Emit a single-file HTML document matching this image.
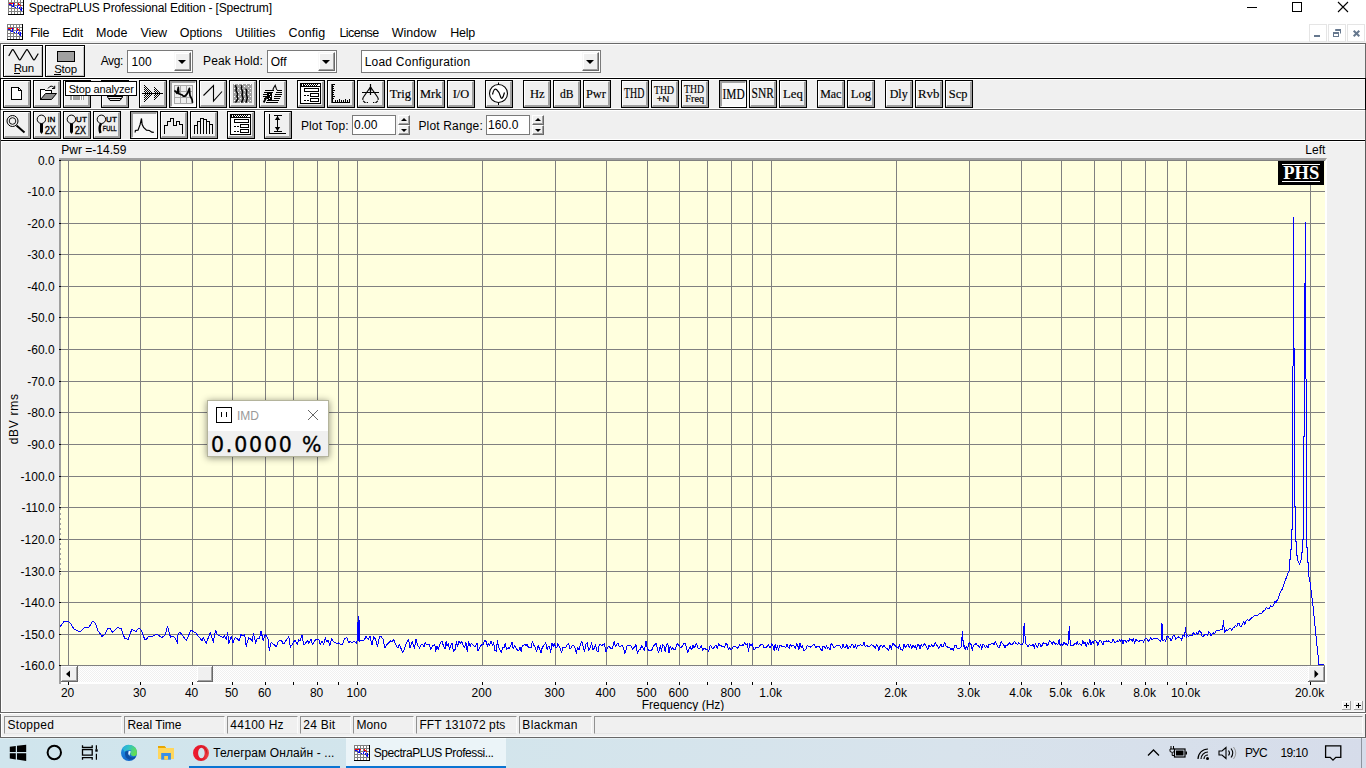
<!DOCTYPE html>
<html><head><meta charset="utf-8"><title>SpectraPLUS Professional Edition - [Spectrum]</title>
<style>
html,body{margin:0;padding:0;width:1366px;height:768px;overflow:hidden;background:#f0f0f0;}
body{position:relative;font-family:"Liberation Sans",sans-serif;font-size:12px;color:#000;}
.a{position:absolute;white-space:nowrap;}
.t{position:absolute;white-space:pre;line-height:normal;}
.btn{position:absolute;width:28px;height:28px;box-sizing:border-box;background:#f0f0f0;border:1px solid #000;}
.btn:before{content:"";position:absolute;left:0;top:0;right:0;bottom:0;border-top:1px solid #fff;border-left:1px solid #fff;border-right:2px solid #a0a0a0;border-bottom:2px solid #a0a0a0;}
.btn.dn{background:#f8f8f8;}
.btn.dn:before{border-top:2px solid #a0a0a0;border-left:2px solid #a0a0a0;border-right:1px solid #fff;border-bottom:1px solid #fff;}
.btn svg{position:absolute;left:0;top:0;}
.big{position:absolute;width:40px;height:32px;box-sizing:border-box;background:#f0f0f0;border:1px solid #000;box-shadow:inset 1px 1px 0 #fff, inset -1px -1px 0 #c4c4c4;}
.combo{position:absolute;box-sizing:border-box;background:#fff;border:1px solid #7a7a7a;}
.dd{position:absolute;top:1px;right:1px;bottom:1px;width:17px;box-sizing:border-box;background:#f0f0f0;border:1px solid #f8f8f8;border-right-color:#696969;border-bottom-color:#696969;box-shadow:inset -1px -1px 0 #a0a0a0, inset 1px 1px 0 #fff;}
.dd:after{content:"";position:absolute;left:3px;top:7px;border-left:4px solid transparent;border-right:4px solid transparent;border-top:4px solid #000;}
.spn{position:absolute;width:12px;height:10px;box-sizing:border-box;background:#f0f0f0;border:1px solid #fff;border-right-color:#696969;border-bottom-color:#696969;box-shadow:inset -1px -1px 0 #a0a0a0;}
.sunk{position:absolute;box-sizing:border-box;border:1px solid #919191;border-right-color:#fbfbfb;border-bottom-color:#e6e6e6;height:18px;top:716px;}
</style></head><body>

<div class="a" style="left:0;top:0;width:1366px;height:41px;background:#fff"></div>
<svg class="a" style="left:8px;top:-1px" width="16" height="16" viewBox="0 0 16 16" shape-rendering="crispEdges">
<rect x="0" y="0" width="16" height="16" fill="#fff"/>
<path d="M0.5 0V16M3.5 0V16M6.5 0V16M9.5 0V16M12.5 0V16M0 0.5H16M0 3.5H16M0 6.5H16M0 9.5H16M0 12.5H16" stroke="#808080" stroke-width="1" fill="none"/>
<path d="M15.5 0V16M0 15.5H16" stroke="#000" stroke-width="1" fill="none"/>
<path d="M1 4h1v1h-1zM2 4h1v1h-1zM3 4h1v1h-1zM4 4h1v1h-1zM6 4h1v1h-1zM10 4h1v1h-1zM10 5h1v1h-1zM11 5h1v1h-1zM12 6h1v1h-1z" fill="#f00"/><path d="M1 5h1v1h-1zM2 5h1v1h-1zM3 6h1v1h-1zM4 7h1v1h-1zM5 4h1v1h-1zM5 5h1v1h-1zM5 6h1v1h-1zM5 7h1v1h-1zM7 8h1v1h-1zM9 8h1v1h-1zM9 7h1v1h-1zM10 6h1v1h-1zM11 8h1v1h-1zM11 9h1v1h-1zM12 10h1v1h-1zM13 8h1v1h-1zM13 9h1v1h-1zM13 10h1v1h-1zM13 11h1v1h-1z" fill="#00f"/>
</svg>
<div class="t" style="left:28.86px;top:1px;font-size:12px;letter-spacing:-0.173px;">SpectraPLUS Professional Edition - [Spectrum]</div>
<svg class="a" style="left:1236px;top:0" width="130" height="22" viewBox="0 0 130 22" shape-rendering="crispEdges">
<rect x="11" y="7" width="10" height="1" fill="#000"/>
<rect x="56.5" y="2.5" width="9" height="9" fill="none" stroke="#000" stroke-width="1"/>
<path d="M102 2L112 12M112 2L102 12" stroke="#000" stroke-width="1.1" fill="none" shape-rendering="auto"/>
</svg>
<svg class="a" style="left:7px;top:24px" width="16" height="16" viewBox="0 0 16 16" shape-rendering="crispEdges">
<rect x="0" y="0" width="16" height="16" fill="#fff"/>
<path d="M0.5 0V16M3.5 0V16M6.5 0V16M9.5 0V16M12.5 0V16M0 0.5H16M0 3.5H16M0 6.5H16M0 9.5H16M0 12.5H16" stroke="#808080" stroke-width="1" fill="none"/>
<path d="M15.5 0V16M0 15.5H16" stroke="#000" stroke-width="1" fill="none"/>
<path d="M1 4h1v1h-1zM2 4h1v1h-1zM3 4h1v1h-1zM4 4h1v1h-1zM6 4h1v1h-1zM10 4h1v1h-1zM10 5h1v1h-1zM11 5h1v1h-1zM12 6h1v1h-1z" fill="#f00"/><path d="M1 5h1v1h-1zM2 5h1v1h-1zM3 6h1v1h-1zM4 7h1v1h-1zM5 4h1v1h-1zM5 5h1v1h-1zM5 6h1v1h-1zM5 7h1v1h-1zM7 8h1v1h-1zM9 8h1v1h-1zM9 7h1v1h-1zM10 6h1v1h-1zM11 8h1v1h-1zM11 9h1v1h-1zM12 10h1v1h-1zM13 8h1v1h-1zM13 9h1v1h-1zM13 10h1v1h-1zM13 11h1v1h-1z" fill="#00f"/>
</svg>
<div class="t" style="left:30.24px;top:26px;font-size:12.5px;letter-spacing:-0.308px;">File</div>
<div class="t" style="left:62.24px;top:26px;font-size:12.5px;letter-spacing:-0.205px;">Edit</div>
<div class="t" style="left:96.02px;top:26px;font-size:12.5px;letter-spacing:0.036px;">Mode</div>
<div class="t" style="left:140.54px;top:26px;font-size:12.5px;letter-spacing:-0.137px;">View</div>
<div class="t" style="left:179.84px;top:26px;font-size:12.5px;letter-spacing:-0.124px;">Options</div>
<div class="t" style="left:235.34px;top:26px;font-size:12.5px;letter-spacing:-0.008px;">Utilities</div>
<div class="t" style="left:288.59px;top:26px;font-size:12.5px;letter-spacing:0.097px;">Config</div>
<div class="t" style="left:339.44px;top:26px;font-size:12.5px;letter-spacing:-0.553px;">License</div>
<div class="t" style="left:391.72px;top:26px;font-size:12.5px;letter-spacing:0.026px;">Window</div>
<div class="t" style="left:450.24px;top:26px;font-size:12.5px;letter-spacing:-0.248px;">Help</div>
<div class="a" style="left:1309px;top:24px;width:18px;height:18px;box-sizing:border-box;border:1px solid #e5e5e5;background:#fff"></div>
<div class="a" style="left:1328px;top:24px;width:18px;height:18px;box-sizing:border-box;border:1px solid #e5e5e5;background:#fff"></div>
<div class="a" style="left:1347px;top:24px;width:18px;height:18px;box-sizing:border-box;border:1px solid #e5e5e5;background:#fff"></div>
<svg class="a" style="left:1309px;top:24px" width="57" height="18" viewBox="0 0 57 18">
<rect x="5" y="11" width="6" height="2" fill="#66788e"/>
<path d="M26.200 5H32V9.600H31V7H26.200Z" fill="#66788e"/><path fill-rule="evenodd" d="M24 8H30V13H24ZM25 10V12H29V10Z" fill="#66788e"/>
<path d="M44.700 6.700L50.300 12.300M50.300 6.700L44.700 12.300" stroke="#66788e" stroke-width="2" fill="none"/>
</svg>
<div class="a" style="left:0;top:43px;width:1366px;height:1px;background:#696969"></div>
<div class="a" style="left:1px;top:44px;width:1365px;height:1px;background:#fff"></div>
<div class="a" style="left:0;top:78px;width:1366px;height:1px;background:#000"></div>
<div class="a" style="left:0;top:109px;width:1366px;height:1px;background:#696969"></div>
<div class="a" style="left:0;top:140px;width:1366px;height:1px;background:#000"></div>
<div class="a" style="left:1px;top:141px;width:1364px;height:1px;background:#fff"></div>
<div class="a" style="left:1px;top:77px;width:1364px;height:1px;background:#fff"></div>
<div class="a" style="left:1px;top:79px;width:1364px;height:1px;background:#fff"></div>
<div class="a" style="left:1px;top:108px;width:1364px;height:1px;background:#fff"></div>
<div class="a" style="left:1px;top:139px;width:1364px;height:1px;background:#fff"></div>
<div class="a" style="left:1px;top:45px;width:2px;height:33px;background:#fff"></div>
<div class="a" style="left:1px;top:79px;width:2px;height:30px;background:#fff"></div>
<div class="a" style="left:1px;top:110px;width:2px;height:30px;background:#fff"></div>
<div class="a" style="left:0;top:44px;width:1px;height:34px;background:#696969"></div><div class="a" style="left:1px;top:45px;width:1px;height:33px;background:#fff"></div>
<div class="a" style="left:0;top:78px;width:1px;height:32px;background:#000"></div>
<div class="a" style="left:1365px;top:78px;width:1px;height:32px;background:#000"></div><div class="a" style="left:1365px;top:44px;width:1px;height:34px;background:#696969"></div>
<div class="a" style="left:0;top:110px;width:1px;height:628px;background:#5a5a5a"></div>
<div class="a" style="left:1px;top:142px;width:1px;height:595px;background:#fff"></div>
<div class="a" style="left:1365px;top:110px;width:1px;height:628px;background:#5a5a5a"></div>
<div class="a" style="left:1px;top:110px;width:1364px;height:1px;background:#fff"></div>
<div class="big" style="left:3px;top:45px"></div>
<svg class="a" style="left:3px;top:45px" width="40" height="32" viewBox="0 0 40 32"><path d="M6 10.5L8.800 5.500Q9.800 3.700 10.800 5.500L15.800 14Q16.800 15.800 17.800 14L23 5.500Q24 3.700 25 5.500L30 14Q31 15.800 32 14L35 9" stroke="#000" stroke-width="1.250" fill="none" stroke-linecap="round"/><rect x="11" y="28" width="6" height="1" fill="#000" shape-rendering="crispEdges"/></svg>
<div class="t" style="left:13.68px;top:61.8px;font-size:11.5px;letter-spacing:-0.358px;">Run</div>
<div class="big" style="left:45px;top:45px;background:#f2f2f2"></div>
<div class="a" style="left:57px;top:51px;width:18px;height:11px;box-sizing:border-box;border:1px solid #000;background:#a0a0a0"></div>
<div class="a" style="left:54px;top:74px;width:7px;height:1px;background:#000"></div>
<div class="t" style="left:54.18px;top:62.8px;font-size:11.5px;letter-spacing:-0.259px;">Stop</div>
<div class="t" style="left:100.76px;top:53.7px;font-size:12px;letter-spacing:-0.429px;">Avg:</div>
<div class="combo" style="left:127px;top:50px;width:66px;height:23px"><div class="dd"></div></div>
<div class="t" style="left:131.40px;top:54.7px;font-size:12px;letter-spacing:0.116px;">100</div>
<div class="t" style="left:202.99px;top:53.7px;font-size:12px;letter-spacing:0.138px;">Peak Hold:</div>
<div class="combo" style="left:267px;top:50px;width:70px;height:23px"><div class="dd"></div></div>
<div class="t" style="left:270.76px;top:54.7px;font-size:12px;letter-spacing:-0.006px;">Off</div>
<div class="combo" style="left:361px;top:50px;width:240px;height:23px"><div class="dd"></div></div>
<div class="t" style="left:364.64px;top:54.7px;font-size:12px;letter-spacing:0.242px;">Load Configuration</div>
<svg width="0" height="0" style="position:absolute"><defs><pattern id="chk" width="2" height="2" patternUnits="userSpaceOnUse"><rect width="1" height="1" fill="#000"/><rect x="1" y="1" width="1" height="1" fill="#000"/></pattern><pattern id="dots" width="4" height="4" patternUnits="userSpaceOnUse"><rect x="1" y="0" width="1" height="1" fill="#fff"/><rect x="3" y="2" width="1" height="1" fill="#fff"/></pattern></defs></svg>
<div class="btn" style="left:3px;top:80px"><svg width="26" height="26" viewBox="1 1 26 26" shape-rendering="crispEdges"><path d="M8.500 7.500H15.500L18.500 10.500V19.500H8.500Z" fill="#fff" stroke="#000"/><path d="M15.500 7.500V10.500H18.500" fill="none" stroke="#000"/></svg></div>
<div class="btn" style="left:33px;top:80px"><svg width="26" height="26" viewBox="1 1 26 26" shape-rendering="crispEdges"><path d="M7.500 19.500V9.500H11.500L12.500 10.500H18.500V13.500" fill="#fff" stroke="#000"/><path d="M7.500 19.500L12.500 13.500H23.500L18.500 19.500Z" fill="#8c8c8c" stroke="#000" shape-rendering="auto"/><path d="M15 8.500Q18 4 21.500 8M21.700 8.500V5.800M21.700 8.500H19" fill="none" stroke="#000" shape-rendering="auto"/></svg></div>
<div class="btn" style="left:63px;top:80px"><svg width="26" height="26" viewBox="1 1 26 26" shape-rendering="crispEdges"><rect x="7" y="6" width="14" height="14" fill="#a0a0a0"/><rect x="8.500" y="16" width="1.500" height="4" fill="#fff"/><rect x="16.500" y="16" width="1" height="4" fill="#fff"/><rect x="18.500" y="16" width="1.500" height="4" fill="#fff"/></svg></div>
<div class="btn" style="left:101px;top:80px"><svg width="26" height="26" viewBox="1 1 26 26" shape-rendering="crispEdges"><path d="M6 16.500H22M8 18.500H20M9 20.500H19" stroke="#000" fill="none"/><path d="M6.500 17L9 20.500M21.500 17L19 20.500" stroke="#000" stroke-width="1" fill="none" shape-rendering="auto"/><path d="M19.500 19.500L21 17.500" stroke="#000" stroke-width="1" stroke-dasharray="1 1" fill="none" shape-rendering="auto"/></svg></div>
<div class="btn" style="left:139px;top:80px"><svg width="26" height="26" viewBox="1 1 26 26" shape-rendering="crispEdges"><path d="M5 5h1v1h-1zM5 7h1v1h-1zM5 9h1v1h-1zM5 11h1v1h-1zM5 13h1v1h-1zM5 15h1v1h-1zM5 17h1v1h-1zM5 19h1v1h-1zM5 21h1v1h-1zM6 6h1v1h-1zM6 8h1v1h-1zM6 10h1v1h-1zM6 12h1v1h-1zM6 14h1v1h-1zM6 16h1v1h-1zM6 18h1v1h-1zM6 20h1v1h-1zM7 7h1v1h-1zM7 9h1v1h-1zM7 11h1v1h-1zM7 13h1v1h-1zM7 15h1v1h-1zM7 17h1v1h-1zM7 19h1v1h-1zM8 8h1v1h-1zM8 10h1v1h-1zM8 12h1v1h-1zM8 14h1v1h-1zM8 16h1v1h-1zM8 18h1v1h-1zM9 9h1v1h-1zM9 11h1v1h-1zM9 13h1v1h-1zM9 15h1v1h-1zM9 17h1v1h-1zM10 10h1v1h-1zM10 12h1v1h-1zM10 14h1v1h-1zM10 16h1v1h-1zM11 11h1v1h-1zM11 13h1v1h-1zM11 15h1v1h-1zM12 12h1v1h-1zM12 14h1v1h-1zM13 13h1v1h-1zM15 7h1v1h-1zM15 9h1v1h-1zM15 11h1v1h-1zM15 13h1v1h-1zM15 15h1v1h-1zM15 17h1v1h-1zM15 19h1v1h-1zM16 8h1v1h-1zM16 10h1v1h-1zM16 12h1v1h-1zM16 14h1v1h-1zM16 16h1v1h-1zM16 18h1v1h-1zM17 9h1v1h-1zM17 11h1v1h-1zM17 13h1v1h-1zM17 15h1v1h-1zM17 17h1v1h-1zM18 10h1v1h-1zM18 12h1v1h-1zM18 14h1v1h-1zM18 16h1v1h-1zM19 11h1v1h-1zM19 13h1v1h-1zM19 15h1v1h-1zM20 12h1v1h-1zM20 14h1v1h-1zM21 13h1v1h-1z" fill="#000"/><path d="M3 13.500H24" stroke="#000"/></svg></div>
<div class="btn dn" style="left:169px;top:80px"><svg width="26" height="26" viewBox="1 1 26 26" shape-rendering="crispEdges"><rect x="5" y="5" width="19" height="19" fill="#eee"/><path d="M5.500 5.500H23.500V23.500H5.500ZM11.500 5.500V23.500M17.500 5.500V23.500M5.500 11.500H23.500M5.500 17.500H23.500" stroke="#a8a8a8" fill="none"/><path d="M5.400 10.500L6.400 11.300L8.100 13.400L9.300 7.400L9.750 13.800L12.700 14.700L14.300 16.100L16 16.100L18.500 13.400L20.400 8.400L21 15.500L23.100 19.700L23.500 22.800" stroke="#000" stroke-width="1.700" fill="none" shape-rendering="auto" stroke-linejoin="round"/></svg></div>
<div class="btn" style="left:199px;top:80px"><svg width="26" height="26" viewBox="1 1 26 26" shape-rendering="crispEdges"><path d="M4.500 15.500L14.500 5.500V21L23 11.500" stroke="#000" stroke-width="1.100" fill="none" shape-rendering="auto"/></svg></div>
<div class="btn" style="left:229px;top:80px"><svg width="26" height="26" viewBox="1 1 26 26" shape-rendering="crispEdges"><rect x="4" y="4" width="19" height="19" fill="#a0a0a0"/><rect x="4" y="4" width="19" height="19" fill="url(#dots)"/><path d="M6.400 5.300L7.500 8L7 10.500L8.500 13.500L8 16L8.800 19L6.600 22.600M12.400 5.300L12.600 9L13.600 12L13 15L14.200 18.500L12.500 22.600M16.800 8.400L17.800 11L17.300 14L18.300 18L17 22.600" stroke="#000" stroke-width="1.500" fill="none" shape-rendering="auto" stroke-linejoin="round"/></svg></div>
<div class="btn" style="left:259px;top:80px"><svg width="26" height="26" viewBox="1 1 26 26" shape-rendering="crispEdges"><path d="M6 10.500H14.500M18 10.500H23M5 12.500H14M16.500 12.500H23M4 14.500H8.500M15.500 14.500H23M4 16.500H7.500M15 16.500H22M4.500 18.500H6.500M14.500 18.500H21M8 20.500H20M7 22.500H19" stroke="#000" fill="none"/><path d="M13.800 11L14.300 8.400L16.200 5.300L17.200 8.400L18 10" stroke="#000" stroke-width="1.100" fill="none" shape-rendering="auto"/><path d="M8.500 12.500H12.500V20H9L8 17Z" fill="#000"/><path d="M10 14.500h1M11 16.500h1M9.500 18.500h1" stroke="#fff"/><path d="M7.500 17L4.700 22.500" stroke="#000" stroke-width="1.800" fill="none" shape-rendering="auto"/></svg></div>
<div class="btn" style="left:297px;top:80px"><svg width="26" height="26" viewBox="1 1 26 26" shape-rendering="crispEdges"><rect x="3.500" y="3.500" width="20" height="20" fill="#fff" stroke="#000"/><rect x="4" y="4" width="19" height="3" fill="#000"/><path d="M7 4.500H20M8 5.500H21" stroke="#fff" stroke-dasharray="1 1"/><rect x="4.500" y="4" width="1.500" height="2" fill="#fff"/><rect x="21" y="4" width="1.500" height="2" fill="#fff"/><rect x="7.500" y="8.500" width="14" height="3" fill="#fff" stroke="#000"/><rect x="13.500" y="13.500" width="8" height="3" fill="#fff" stroke="#000"/><rect x="13.500" y="18.500" width="8" height="3" fill="#fff" stroke="#000"/><path d="M7 15.500H12M7 20.500H12" stroke="#000" stroke-dasharray="2 1"/></svg></div>
<div class="btn" style="left:327px;top:80px"><svg width="26" height="26" viewBox="1 1 26 26" shape-rendering="crispEdges"><path d="M5.500 4V23M5 22.500H23" stroke="#000" stroke-width="1" fill="none"/><path d="M4.500 4V23" stroke="#555" stroke-width="1" fill="none"/><path d="M5 4.500H8M5 6.500H7M5 8.500H7M5 10.500H8M5 12.500H7M5 14.500H7M5 16.500H8M5 18.500H7M8.500 22V20M10.500 22V20M12.500 22V19M14.500 22V20M16.500 22V20M18.500 22V19M20.500 22V20M22.500 22V19" stroke="#000"/></svg></div>
<div class="btn" style="left:357px;top:80px"><svg width="26" height="26" viewBox="1 1 26 26" shape-rendering="crispEdges"><g shape-rendering="auto" fill="none" stroke="#000"><path d="M13.500 4V15" stroke-width="1.200"/><path d="M5 12.500H22" stroke-width="1"/><path d="M13.500 7L6.500 17M13.500 7L20.500 17" stroke-width="1.200"/><path d="M12.500 7.500h2v3h-2z" fill="#000" stroke="none"/><path d="M6.500 17Q4.500 20 8 22.500H11M20.500 17Q22.500 20 19 22.500H16" stroke-width="1.200" stroke-dasharray="3 1"/></g></svg></div>
<div class="btn" style="left:387px;top:80px"><svg width="26" height="26" viewBox="1 1 26 26"><text x="2.8" y="18" font-family="Liberation Serif,serif" font-size="13.5" font-weight="400" textLength="21.2" lengthAdjust="spacingAndGlyphs" stroke="#000" stroke-width="0.18">Trig</text></svg></div>
<div class="btn" style="left:417px;top:80px"><svg width="26" height="26" viewBox="1 1 26 26"><text x="3.0" y="18" font-family="Liberation Serif,serif" font-size="13.5" font-weight="400" textLength="21.4" lengthAdjust="spacingAndGlyphs" stroke="#000" stroke-width="0.18">Mrk</text></svg></div>
<div class="btn" style="left:447px;top:80px"><svg width="26" height="26" viewBox="1 1 26 26"><text x="5.7" y="18" font-family="Liberation Serif,serif" font-size="13.5" font-weight="400" textLength="16.5" lengthAdjust="spacingAndGlyphs" stroke="#000" stroke-width="0.18">I/O</text></svg></div>
<div class="btn" style="left:485px;top:80px"><svg width="26" height="26" viewBox="1 1 26 26" shape-rendering="crispEdges"><g shape-rendering="auto"><circle cx="13.500" cy="13.500" r="9" fill="#fff" stroke="#000" stroke-width="1.100"/><path d="M13.500 2.500V5M13.500 22.500V25" stroke="#000"/><path d="M7.500 14.500Q9 7.500 11.500 9.500T15.500 16.500T19.500 12.500" stroke="#000" stroke-width="1.200" fill="none"/></g></svg></div>
<div class="btn" style="left:523px;top:80px"><svg width="26" height="26" viewBox="1 1 26 26"><text x="6.9" y="18" font-family="Liberation Serif,serif" font-size="13.5" font-weight="400" textLength="14.7" lengthAdjust="spacingAndGlyphs" stroke="#000" stroke-width="0.18">Hz</text></svg></div>
<div class="btn" style="left:553px;top:80px"><svg width="26" height="26" viewBox="1 1 26 26"><text x="7.0" y="18" font-family="Liberation Serif,serif" font-size="13.5" font-weight="400" textLength="13.5" lengthAdjust="spacingAndGlyphs" stroke="#000" stroke-width="0.18">dB</text></svg></div>
<div class="btn" style="left:583px;top:80px"><svg width="26" height="26" viewBox="1 1 26 26"><text x="3.0" y="18" font-family="Liberation Serif,serif" font-size="13.5" font-weight="400" textLength="19.9" lengthAdjust="spacingAndGlyphs" stroke="#000" stroke-width="0.18">Pwr</text></svg></div>
<div class="btn" style="left:621px;top:80px"><svg width="26" height="26" viewBox="1 1 26 26"><text x="3.0" y="18" font-family="Liberation Serif,serif" font-size="14.5" font-weight="400" textLength="20.3" lengthAdjust="spacingAndGlyphs" stroke="#000" stroke-width="0.18">THD</text></svg></div>
<div class="btn" style="left:651px;top:80px"><svg width="26" height="26" viewBox="1 1 26 26"><text x="3.0" y="13.8" font-family="Liberation Serif,serif" font-size="13.5" font-weight="400" textLength="20.0" lengthAdjust="spacingAndGlyphs" stroke="#000" stroke-width="0.18">THD</text><text x="5.7" y="22.3" font-family="Liberation Sans,sans-serif" font-size="9" font-weight="400" textLength="12.5" lengthAdjust="spacingAndGlyphs" stroke="#000" stroke-width="0.18">+N</text></svg></div>
<div class="btn" style="left:681px;top:80px"><svg width="26" height="26" viewBox="1 1 26 26"><text x="3.0" y="12.8" font-family="Liberation Serif,serif" font-size="13" font-weight="400" textLength="20.0" lengthAdjust="spacingAndGlyphs" stroke="#000" stroke-width="0.18">THD</text><text x="4.3" y="21.5" font-family="Liberation Serif,serif" font-size="10.5" font-weight="400" textLength="19.0" lengthAdjust="spacingAndGlyphs" stroke="#000" stroke-width="0.18">Freq</text></svg></div>
<div class="btn dn" style="left:719px;top:80px"><svg width="26" height="26" viewBox="0 0 26 26"><text x="2.6" y="18" font-family="Liberation Serif,serif" font-size="14.5" font-weight="400" textLength="22.0" lengthAdjust="spacingAndGlyphs" stroke="#000" stroke-width="0.18">IMD</text></svg></div>
<div class="btn" style="left:749px;top:80px"><svg width="26" height="26" viewBox="1 1 26 26"><text x="2.6" y="18" font-family="Liberation Serif,serif" font-size="14.5" font-weight="400" textLength="22.3" lengthAdjust="spacingAndGlyphs" stroke="#000" stroke-width="0.18">SNR</text></svg></div>
<div class="btn" style="left:779px;top:80px"><svg width="26" height="26" viewBox="1 1 26 26"><text x="4.0" y="18" font-family="Liberation Serif,serif" font-size="13.5" font-weight="400" textLength="19.8" lengthAdjust="spacingAndGlyphs" stroke="#000" stroke-width="0.18">Leq</text></svg></div>
<div class="btn" style="left:817px;top:80px"><svg width="26" height="26" viewBox="1 1 26 26"><text x="3.2" y="18" font-family="Liberation Serif,serif" font-size="13.5" font-weight="400" textLength="21.2" lengthAdjust="spacingAndGlyphs" stroke="#000" stroke-width="0.18">Mac</text></svg></div>
<div class="btn" style="left:847px;top:80px"><svg width="26" height="26" viewBox="1 1 26 26"><text x="3.8" y="18" font-family="Liberation Serif,serif" font-size="13.5" font-weight="400" textLength="20.4" lengthAdjust="spacingAndGlyphs" stroke="#000" stroke-width="0.18">Log</text></svg></div>
<div class="btn" style="left:885px;top:80px"><svg width="26" height="26" viewBox="1 1 26 26"><text x="4.7" y="18" font-family="Liberation Serif,serif" font-size="13.5" font-weight="400" textLength="18.0" lengthAdjust="spacingAndGlyphs" stroke="#000" stroke-width="0.18">Dly</text></svg></div>
<div class="btn" style="left:915px;top:80px"><svg width="26" height="26" viewBox="1 1 26 26"><text x="3.0" y="18" font-family="Liberation Serif,serif" font-size="13.5" font-weight="400" textLength="21.4" lengthAdjust="spacingAndGlyphs" stroke="#000" stroke-width="0.18">Rvb</text></svg></div>
<div class="btn" style="left:945px;top:80px"><svg width="26" height="26" viewBox="1 1 26 26"><text x="3.8" y="18" font-family="Liberation Serif,serif" font-size="13.5" font-weight="400" textLength="18.6" lengthAdjust="spacingAndGlyphs" stroke="#000" stroke-width="0.18">Scp</text></svg></div>
<div class="a" style="left:65px;top:81px;width:72px;height:15px;box-sizing:border-box;border:1px solid #000;background:#fff"></div>
<div class="t" style="left:68.70px;top:82.8px;font-size:11px;letter-spacing:-0.167px;">Stop analyzer</div>
<div class="btn" style="left:3px;top:111px"><svg width="26" height="26" viewBox="1 1 26 26" shape-rendering="crispEdges"><g shape-rendering="auto" fill="none" stroke="#000"><circle cx="9.500" cy="10" r="5.500"/><circle cx="9.500" cy="10" r="3.300" stroke-width="0.900"/><path d="M13.500 14.500L21.500 21.500" stroke-width="2"/></g></svg></div>
<div class="btn" style="left:33px;top:111px"><svg width="26" height="26" viewBox="1 1 26 26" shape-rendering="crispEdges"><circle cx="8.400" cy="8.300" r="4.200" fill="none" stroke="#000" shape-rendering="auto"/><path d="M7 12.500H10V21L8.500 23L7 21Z" fill="#000" shape-rendering="auto"/><text x="14.6" y="11" font-family="Liberation Sans,sans-serif" font-size="7.5" font-weight="normal" textLength="7.6" lengthAdjust="spacingAndGlyphs" stroke="#000" stroke-width="0.35">IN</text><text x="11.7" y="22.8" font-family="Liberation Sans,sans-serif" font-size="11.5" font-weight="normal" textLength="11.4" lengthAdjust="spacingAndGlyphs" stroke="#000" stroke-width="0.35">2X</text></svg></div>
<div class="btn" style="left:63px;top:111px"><svg width="26" height="26" viewBox="1 1 26 26" shape-rendering="crispEdges"><circle cx="8.400" cy="8.300" r="4.200" fill="none" stroke="#000" shape-rendering="auto"/><path d="M7 12.500H10V21L8.500 23L7 21Z" fill="#000" shape-rendering="auto"/><text x="13.1" y="11" font-family="Liberation Sans,sans-serif" font-size="7.5" font-weight="normal" textLength="10.7" lengthAdjust="spacingAndGlyphs" stroke="#000" stroke-width="0.35">UT</text><text x="11.7" y="22.8" font-family="Liberation Sans,sans-serif" font-size="11.5" font-weight="normal" textLength="11.4" lengthAdjust="spacingAndGlyphs" stroke="#000" stroke-width="0.35">2X</text></svg></div>
<div class="btn" style="left:93px;top:111px"><svg width="26" height="26" viewBox="1 1 26 26" shape-rendering="crispEdges"><circle cx="8.400" cy="8.300" r="4.200" fill="none" stroke="#000" shape-rendering="auto"/><path d="M8 12.500Q5.500 17 7.500 22" stroke="#000" stroke-width="2.400" fill="none" shape-rendering="auto"/><text x="13.1" y="11" font-family="Liberation Sans,sans-serif" font-size="7.5" font-weight="normal" textLength="10.7" lengthAdjust="spacingAndGlyphs" stroke="#000" stroke-width="0.35">UT</text><text x="9.8" y="20" font-family="Liberation Sans,sans-serif" font-size="7.5" font-weight="normal" textLength="14" lengthAdjust="spacingAndGlyphs" stroke="#000" stroke-width="0.35">FULL</text></svg></div>
<div class="btn dn" style="left:130px;top:111px"><svg width="26" height="26" viewBox="1 1 26 26" shape-rendering="crispEdges"><path d="M5.100 21.500L5.400 19.500L8 19.200L10 13.900L11.500 7.500L12.100 13.300L13.600 16.500L16.500 19.200L19.400 19.500L21.800 21.200L23.800 21.400" stroke="#000" stroke-width="1.200" fill="none" shape-rendering="auto"/></svg></div>
<div class="btn" style="left:160px;top:111px"><svg width="26" height="26" viewBox="1 1 26 26" shape-rendering="crispEdges"><path d="M4.500 22.500V14.500H7.500V10.500H10.500V7.500H13.500V14.500H16.500V10.500H19.500V13.500H22.500V22.500" stroke="#000" fill="none"/></svg></div>
<div class="btn" style="left:190px;top:111px"><svg width="26" height="26" viewBox="1 1 26 26" shape-rendering="crispEdges"><path d="M4.500 22.500V14.500H7.500V22.500M7.500 14.500V10.500H10.500V22.500M10.500 10.500V7.500H13.500V22.500M13.500 8.500H16.500V22.500M16.500 10.500H19.500V22.500M19.500 13.500H22.500V22.500" stroke="#000" fill="none"/></svg></div>
<div class="btn" style="left:227px;top:111px"><svg width="26" height="26" viewBox="1 1 26 26" shape-rendering="crispEdges"><rect x="3.500" y="3.500" width="20" height="20" fill="#fff" stroke="#000"/><rect x="4" y="4" width="19" height="3" fill="#000"/><path d="M7 4.500H20M8 5.500H21" stroke="#fff" stroke-dasharray="1 1"/><rect x="4.500" y="4" width="1.500" height="2" fill="#fff"/><rect x="21" y="4" width="1.500" height="2" fill="#fff"/><rect x="7.500" y="8.500" width="14" height="3" fill="#fff" stroke="#000"/><rect x="13.500" y="13.500" width="8" height="3" fill="#fff" stroke="#000"/><rect x="13.500" y="18.500" width="8" height="3" fill="#fff" stroke="#000"/><path d="M7 15.500H12M7 20.500H12" stroke="#000" stroke-dasharray="2 1"/></svg></div>
<div class="btn" style="left:264px;top:111px"><svg width="26" height="26" viewBox="1 1 26 26" shape-rendering="crispEdges"><path d="M5.500 3V22.500H22" stroke="#000" fill="none"/><path d="M13.500 5V20M9.500 4.500H17.500M9.500 20.500H17.500" stroke="#000"/><path d="M13.500 5L10.800 9H16.200ZM13.500 20L10.800 16H16.200Z" fill="#000" shape-rendering="auto"/></svg></div>
<div class="t" style="left:300.88px;top:118.5px;font-size:12px;letter-spacing:0.155px;">Plot Top:</div>
<div class="combo" style="left:352px;top:115px;width:44px;height:20px"></div>
<div class="t" style="left:353.93px;top:118px;font-size:12px;letter-spacing:0.055px;">0.00</div>
<div class="t" style="left:418.38px;top:118.5px;font-size:12px;letter-spacing:0.169px;">Plot Range:</div>
<div class="combo" style="left:486px;top:115px;width:44px;height:20px"></div>
<div class="t" style="left:487.91px;top:118px;font-size:12px;letter-spacing:0.110px;">160.0</div>
<div class="spn" style="left:398px;top:115px"><div class="a" style="left:2px;top:2px;border-left:3px solid transparent;border-right:3px solid transparent;border-bottom:3px solid #000"></div></div>
<div class="spn" style="left:398px;top:125px"><div class="a" style="left:2px;top:3px;border-left:3px solid transparent;border-right:3px solid transparent;border-top:3px solid #000"></div></div>
<div class="spn" style="left:532px;top:115px"><div class="a" style="left:2px;top:2px;border-left:3px solid transparent;border-right:3px solid transparent;border-bottom:3px solid #000"></div></div>
<div class="spn" style="left:532px;top:125px"><div class="a" style="left:2px;top:3px;border-left:3px solid transparent;border-right:3px solid transparent;border-top:3px solid #000"></div></div>
<svg class="a" style="left:0;top:0" width="1366" height="768" viewBox="0 0 1366 768" font-family="Liberation Sans, sans-serif" font-size="12">
<rect x="61" y="161" width="1264" height="505" fill="#ffffde"/>
<rect x="1325" y="159" width="2" height="507" fill="#fff"/>
<path d="M59 158H1327L1325 161H59Z" fill="#a0a0a0"/>
<rect x="59" y="158" width="2" height="345" fill="#a0a0a0"/><rect x="59" y="503" width="1" height="163" fill="#909090"/><rect x="60" y="503" width="1" height="163" fill="#ffffde"/><path d="M60.500 503V575" stroke="#a0a0a0" stroke-dasharray="2 3" shape-rendering="crispEdges"/>
<path d="M68.5 161V666M140.5 161V666M192.5 161V666M232.5 161V666M265.5 161V666M293.5 161V666M317.5 161V666M338.5 161V666M357.5 161V666M482.5 161V666M555.5 161V666M606.5 161V666M647.5 161V666M679.5 161V666M707.5 161V666M731.5 161V666M752.5 161V666M771.5 161V666M896.5 161V666M969.5 161V666M1021.5 161V666M1061.5 161V666M1094.5 161V666M1121.5 161V666M1145.5 161V666M1167.5 161V666M1186.5 161V666M1310.5 161V666M61 160.5H1325M61 191.5H1325M61 223.5H1325M61 254.5H1325M61 286.5H1325M61 317.5H1325M61 349.5H1325M61 381.5H1325M61 412.5H1325M61 444.5H1325M61 476.5H1325M61 507.5H1325M61 539.5H1325M61 571.5H1325M61 602.5H1325M61 634.5H1325M61 665.5H1325" stroke="#808080" stroke-width="1" fill="none" shape-rendering="crispEdges"/>
<text x="54.6" y="164.9" text-anchor="end">0.0</text>
<text x="54.6" y="195.9" text-anchor="end">-10.0</text>
<text x="54.6" y="227.9" text-anchor="end">-20.0</text>
<text x="54.6" y="258.9" text-anchor="end">-30.0</text>
<text x="54.6" y="290.9" text-anchor="end">-40.0</text>
<text x="54.6" y="321.9" text-anchor="end">-50.0</text>
<text x="54.6" y="353.9" text-anchor="end">-60.0</text>
<text x="54.6" y="385.9" text-anchor="end">-70.0</text>
<text x="54.6" y="416.9" text-anchor="end">-80.0</text>
<text x="54.6" y="448.9" text-anchor="end">-90.0</text>
<text x="54.6" y="480.9" text-anchor="end">-100.0</text>
<text x="54.6" y="511.9" text-anchor="end">-110.0</text>
<text x="54.6" y="543.9" text-anchor="end">-120.0</text>
<text x="54.6" y="575.9" text-anchor="end">-130.0</text>
<text x="54.6" y="606.9" text-anchor="end">-140.0</text>
<text x="54.6" y="638.9" text-anchor="end">-150.0</text>
<text x="54.6" y="669.9" text-anchor="end">-160.0</text>
<path d="M59 160.5H61M59 191.5H61M59 223.5H61M59 254.5H61M59 286.5H61M59 317.5H61M59 349.5H61M59 381.5H61M59 412.5H61M59 444.5H61M59 476.5H61M59 507.5H61M59 539.5H61M59 571.5H61M59 602.5H61M59 634.5H61M59 665.5H61" stroke="#000" stroke-width="1" fill="none" shape-rendering="crispEdges"/>
<text x="61.3" y="153.7">Pwr =-14.59</text>
<text x="1325.3" y="154" text-anchor="end">Left</text>
<text transform="translate(18,444.3) rotate(-90)" textLength="50.3">dBV rms</text>
<rect x="1278" y="161" width="46" height="24" fill="#000"/>
<text x="1283.2" y="179" textLength="36" lengthAdjust="spacingAndGlyphs" font-family="Liberation Serif, serif" font-weight="bold" font-size="18" fill="#fff">PHS</text>
<rect x="1282" y="164" width="38" height="1" fill="#fff"/><rect x="1282" y="181" width="38" height="1" fill="#fff"/>
<path d="M60.3 626.7L63.8 621.7L68.5 621.7L70.8 624.0L73.8 628.7L79.0 631.4L81.4 631.0L84.3 627.5L89.0 627.2L92.5 621.5L94.9 622.3L97.8 630.5L101.9 636.3L104.8 634.6L107.8 628.5L110.1 628.7L112.4 632.2L117.7 627.5L121.2 628.7L124.8 638.7L128.3 639.3L131.8 629.3L135.9 631.7L138.8 628.1L141.2 629.9L144.7 639.3L146.4 639.3L148.2 636.6L152.3 636.3L157.0 634.2L161.7 637.5L165.2 634.9L167.5 626.4L170.5 637.3L173.4 636.3L175.2 638.1L177.5 643.4L178.1 634.0L179.9 632.2L186.3 640.4L191.0 630.2L195.7 632.8L202.1 641.0L203.3 637.5L206.2 643.4L210.3 632.2L213.3 642.2L215.5 630.3L217.3 634.4L219.0 635.4L220.8 636.2L222.6 637.8L224.6 636.0L226.2 639.8L227.6 632.8L228.9 643.6L231.2 636.5L233.1 642.9L234.6 638.1L235.9 637.7L237.4 638.8L239.2 640.6L240.9 634.5L242.9 636.0L244.7 634.9L246.2 646.3L248.5 637.9L250.5 638.5L252.2 641.7L253.5 633.1L255.6 643.2L257.3 638.4L259.5 638.3L261.0 631.3L263.3 640.7L265.0 634.7L266.3 636.0L267.9 637.8L269.3 650.4L271.3 642.0L272.8 644.0L274.1 644.4L276.2 647.0L278.0 641.8L279.5 640.2L281.4 640.0L282.8 643.4L284.4 643.1L286.7 639.3L288.8 636.9L290.3 647.1L292.3 644.9L293.7 641.7L295.2 640.6L297.3 645.0L298.7 639.7L300.1 640.6L302.0 634.7L303.7 645.0L305.4 643.6L307.3 640.3L308.8 643.1L311.0 639.5L312.5 644.4L314.5 641.0L316.8 639.0L318.9 639.7L320.3 644.8L321.7 641.1L323.7 644.3L325.2 637.8L326.8 641.4L328.3 640.5L329.8 645.3L331.7 638.1L333.3 641.9L335.5 642.4L337.1 644.1L338.8 642.6L340.5 644.4L342.4 644.6L344.5 638.8L346.8 637.4L348.7 642.4L350.2 641.7L352.4 642.4L354.4 641.4L356.9 643.6L358.3 616.0L359.7 641.2L361.8 640.3L364.0 640.3L366.0 636.6L368.2 639.5L369.9 636.0L372.0 644.7L373.7 636.4L375.6 639.6L377.5 646.8L379.5 636.5L380.8 636.1L383.0 639.3L385.0 648.0L386.9 644.5L388.7 642.6L390.7 640.9L392.0 641.8L393.6 639.6L395.6 644.3L397.8 648.0L399.3 644.7L401.3 649.1L402.8 652.8L404.8 647.6L406.5 642.8L408.5 639.3L410.0 648.0L412.2 641.5L414.4 648.5L416.0 638.6L417.4 644.9L419.6 648.1L421.6 644.2L422.7 644.6L424.0 647.2L425.2 642.7L426.6 645.0L428.1 644.0L429.7 645.3L430.7 650.0L432.2 646.3L433.6 645.2L434.8 644.6L435.8 651.3L437.1 646.0L438.3 649.6L439.3 646.5L440.6 642.6L442.0 641.4L443.6 646.3L445.0 648.8L446.1 641.3L447.1 646.1L448.2 643.1L449.4 649.5L450.7 645.4L452.0 642.8L453.5 651.8L455.1 649.4L456.5 642.0L457.6 646.7L459.1 640.8L460.3 643.3L461.8 641.9L463.4 646.5L464.5 647.5L465.9 642.3L467.4 652.0L468.5 641.4L470.1 646.3L471.4 643.5L473.0 645.0L474.5 646.8L475.7 646.1L477.1 642.8L478.1 651.2L479.6 648.0L480.7 646.1L481.9 644.4L483.0 645.0L484.3 641.1L485.7 640.3L487.3 646.2L488.3 643.8L489.4 645.5L490.9 641.1L492.3 645.2L493.6 642.4L494.8 650.3L496.3 651.2L497.4 640.7L498.8 647.2L500.1 650.0L501.4 652.5L502.8 647.6L504.1 647.4L505.3 643.0L506.6 649.9L508.0 647.8L509.3 648.4L510.8 645.2L512.1 642.0L513.2 648.6L514.8 645.5L516.0 648.2L517.4 650.2L519.0 650.4L520.0 646.9L521.1 651.3L522.3 645.4L523.5 645.4L524.9 644.4L526.0 646.1L527.1 644.1L528.4 647.5L529.7 647.5L531.0 648.2L532.4 641.6L533.8 645.4L535.1 646.9L536.7 651.8L538.1 645.5L539.7 649.1L541.2 652.9L542.4 646.4L543.4 646.2L544.6 644.5L545.7 642.6L547.2 649.3L548.2 646.3L549.5 646.1L550.6 653.0L552.0 643.1L553.1 646.7L554.4 643.6L555.8 648.0L556.9 647.2L557.9 643.4L559.2 646.3L560.3 648.4L561.4 652.8L563.0 647.6L564.6 647.3L566.2 646.9L567.4 644.5L568.7 643.6L570.0 648.6L571.0 647.9L572.5 645.4L573.7 645.4L575.2 648.0L576.3 653.2L577.6 647.5L579.1 649.8L580.5 644.1L581.7 641.4L583.1 646.6L584.6 651.5L585.7 644.7L587.2 642.5L588.7 650.9L590.2 647.5L591.6 642.7L592.9 649.7L594.3 648.3L595.6 644.8L596.6 650.7L598.0 651.6L599.1 645.7L600.3 644.2L601.7 645.7L602.9 644.6L604.5 644.0L606.0 651.6L607.6 647.6L609.0 646.3L610.2 647.6L611.3 649.0L612.5 648.4L614.1 641.5L615.4 646.6L616.7 644.0L618.3 643.5L619.4 647.0L620.7 646.2L622.3 645.5L623.4 647.3L624.7 653.4L626.1 649.8L627.3 645.0L628.6 645.6L629.8 645.1L631.2 646.2L632.6 649.4L633.8 647.1L634.8 647.0L635.9 644.5L637.5 653.4L638.9 650.0L640.5 649.8L641.5 645.4L642.8 647.1L644.4 651.0L646.0 641.4L647.4 648.7L648.9 650.4L650.2 650.0L651.5 650.8L652.6 648.2L653.7 645.5L655.0 644.5L656.1 643.1L657.5 649.7L658.8 652.1L660.4 645.7L661.5 651.4L662.6 644.1L664.0 646.3L665.2 651.9L666.5 644.1L667.9 643.8L669.0 653.3L670.2 646.1L671.7 649.3L672.7 647.8L674.0 650.2L675.3 649.3L676.4 645.4L677.4 644.0L678.8 645.1L680.0 647.1L681.2 647.5L682.7 646.0L683.8 643.8L685.2 643.8L686.4 646.6L687.6 652.9L688.8 649.8L690.2 646.6L691.6 649.9L693.0 645.5L694.2 647.7L695.3 646.1L696.3 643.0L697.7 647.3L698.9 648.8L700.3 647.5L701.6 645.8L702.6 650.3L703.9 648.1L705.0 648.5L706.3 649.5L707.5 649.2L708.7 651.3L710.1 645.3L711.2 646.2L712.5 648.7L713.7 648.1L715.1 645.9L716.2 645.6L717.4 648.5L718.5 643.9L719.6 645.5L720.8 645.7L722.2 646.3L723.5 646.6L724.8 647.2L726.0 642.9L727.2 644.8L728.5 649.4L729.8 647.9L731.1 650.0L732.2 648.6L733.5 646.0L734.6 646.0L735.9 646.7L737.1 648.3L738.4 646.9L739.6 644.9L740.8 645.7L742.2 644.9L743.4 645.7L744.7 642.9L745.8 645.0L747.2 643.7L748.5 651.2L749.8 643.8L751.1 645.9L752.3 643.6L753.4 649.0L754.6 649.7L756.0 647.4L757.2 648.0L758.3 647.4L759.4 646.5L760.6 644.8L761.6 644.2L762.7 644.4L763.7 647.4L765.1 647.8L766.1 647.6L767.2 646.1L768.3 644.3L769.4 646.4L770.4 648.0L771.7 643.5L772.9 645.6L774.1 650.5L775.2 644.1L776.3 649.2L777.5 646.0L778.6 650.6L779.6 645.5L780.8 645.2L782.0 646.4L783.4 646.6L784.6 646.9L785.8 647.6L787.0 643.9L788.2 647.7L789.3 648.2L790.4 644.1L791.7 646.3L793.1 645.5L794.2 646.3L795.6 648.5L796.6 643.5L797.9 646.1L798.9 650.2L800.0 642.6L801.1 647.6L802.4 645.4L803.7 650.4L804.9 650.1L806.3 648.8L807.3 645.4L808.6 646.3L809.9 646.2L811.0 647.3L812.1 646.1L813.3 644.8L814.6 644.9L815.6 648.0L817.0 646.2L818.4 646.2L819.5 646.6L820.8 649.4L822.0 650.6L823.0 646.2L824.1 645.9L825.3 648.6L826.5 645.4L827.6 648.3L828.9 647.5L830.0 649.9L831.1 643.7L832.5 645.2L833.7 647.4L835.0 647.0L836.0 646.0L837.3 645.2L838.5 645.7L839.8 645.9L840.9 648.0L841.9 648.0L843.0 644.4L844.3 647.5L845.6 647.3L846.9 644.7L848.0 648.6L849.2 646.5L850.5 647.1L851.9 643.8L853.1 645.4L854.1 648.1L855.4 644.7L856.4 648.1L857.7 645.4L859.1 645.5L860.4 644.6L861.7 645.7L862.9 645.0L864.0 642.3L865.2 647.0L866.5 645.2L867.9 646.5L869.1 647.1L870.2 645.6L871.5 644.7L872.8 645.3L874.0 646.4L875.4 648.5L876.4 644.9L877.6 645.8L878.9 650.6L880.3 645.4L881.6 645.6L882.9 647.5L884.0 645.3L885.3 647.2L886.6 648.8L887.6 649.0L888.6 650.6L890.0 645.1L891.3 649.3L892.6 643.4L893.7 644.3L894.7 645.1L895.8 646.3L897.0 647.3L898.2 648.5L899.3 644.8L900.5 648.9L901.5 649.6L902.8 650.5L904.0 643.9L905.2 647.7L906.5 646.0L907.8 644.0L909.2 647.5L910.5 644.6L911.7 648.4L912.9 644.8L914.2 647.7L915.3 645.1L916.4 649.1L917.6 644.3L918.9 645.2L920.2 649.0L921.2 644.1L922.3 646.9L923.4 645.3L924.4 644.0L925.5 645.0L926.7 647.0L927.7 649.4L929.0 645.5L930.4 646.6L931.6 644.8L932.9 646.9L934.1 645.5L935.4 642.2L936.5 645.0L937.5 645.5L938.6 648.0L939.6 646.9L940.9 644.4L942.1 646.6L943.3 646.2L944.7 642.2L945.8 646.1L947.2 646.5L948.4 647.9L949.7 647.5L951.1 650.2L952.2 648.3L953.4 650.3L954.8 645.2L955.9 645.2L957.3 649.0L958.3 648.3L959.4 648.5L961.4 646.9L962.4 631.0L963.4 646.5L964.1 645.0L965.2 649.4L966.3 646.2L967.4 649.3L968.7 643.9L969.8 642.7L971.1 644.5L972.2 650.2L973.4 645.2L974.5 645.0L975.9 643.4L977.1 645.1L978.1 645.2L979.4 647.2L980.7 644.8L981.7 649.2L982.8 644.3L983.9 645.0L985.3 647.8L986.7 645.8L988.0 647.7L989.1 644.2L990.2 644.1L991.4 643.8L992.7 643.0L994.0 644.8L995.4 641.1L996.6 644.3L997.7 646.5L999.0 647.6L1000.1 645.4L1001.3 641.7L1002.6 643.5L1003.7 644.8L1004.9 647.7L1006.1 645.3L1007.4 645.6L1008.6 643.7L1009.7 642.6L1010.7 644.5L1011.9 644.7L1013.0 643.7L1014.4 641.3L1015.6 643.4L1016.7 644.0L1017.7 644.8L1018.9 642.8L1020.1 643.9L1021.3 644.7L1022.4 643.1L1022.9 644.9L1024.2 623.0L1025.5 643.8L1026.9 645.1L1028.0 646.5L1029.4 644.6L1030.7 645.4L1032.1 645.9L1033.4 644.1L1034.4 648.3L1035.4 643.2L1036.6 646.1L1037.6 647.7L1038.6 643.6L1039.9 643.6L1041.0 646.6L1042.1 645.6L1043.3 642.9L1044.4 643.2L1045.8 643.2L1047.0 645.5L1048.2 644.2L1049.5 640.4L1050.9 641.5L1052.1 644.6L1053.2 641.9L1054.5 642.7L1055.6 644.5L1056.8 643.7L1057.9 644.8L1059.1 639.4L1060.2 645.6L1061.5 643.8L1062.8 645.3L1063.8 642.2L1065.1 644.5L1066.1 642.9L1067.2 645.4L1068.3 643.8L1069.3 626.0L1070.3 645.5L1072.3 646.0L1073.6 644.9L1075.0 643.1L1076.1 644.3L1077.1 641.7L1078.4 644.9L1079.7 643.4L1080.7 644.5L1081.8 645.1L1082.8 640.6L1083.9 643.9L1085.0 642.3L1086.2 646.2L1087.5 642.9L1088.6 644.2L1089.9 639.7L1091.0 645.4L1092.1 641.6L1093.2 643.6L1094.2 640.7L1095.2 640.5L1096.6 641.3L1098.0 645.4L1099.3 641.1L1100.4 640.1L1101.7 642.2L1103.0 644.5L1104.0 641.5L1105.1 642.2L1106.2 640.6L1107.3 641.7L1108.4 640.8L1109.5 641.8L1110.7 642.9L1111.8 642.4L1112.9 639.6L1113.9 640.4L1115.1 643.2L1116.3 641.6L1117.4 640.9L1118.4 641.6L1119.6 640.0L1120.8 641.4L1121.8 639.4L1122.9 644.2L1124.0 640.5L1125.1 640.2L1126.2 642.6L1127.4 640.5L1128.6 641.1L1129.9 638.8L1131.1 639.7L1132.2 641.4L1133.4 638.4L1134.7 643.3L1135.7 639.3L1136.8 640.4L1137.9 641.1L1139.2 641.3L1140.2 640.3L1141.4 640.3L1142.6 640.3L1143.7 642.2L1144.9 638.8L1146.1 638.7L1147.3 639.2L1148.6 641.3L1149.9 639.3L1151.0 637.6L1152.2 640.1L1153.5 638.8L1154.7 638.2L1155.8 638.9L1156.9 638.3L1158.1 639.0L1159.2 640.1L1160.3 641.1L1161.0 640.6L1162.0 623.5L1163.0 640.5L1164.6 639.7L1165.7 641.1L1166.8 636.5L1167.8 636.0L1168.9 638.2L1170.0 638.2L1171.2 641.1L1172.3 638.2L1173.4 635.3L1174.6 635.9L1175.8 639.1L1177.0 637.9L1178.3 636.8L1179.4 637.5L1180.6 638.3L1181.6 640.5L1182.7 635.3L1184.5 636.4L1185.5 628.0L1186.5 637.2L1187.4 635.4L1188.6 636.5L1189.6 635.2L1190.9 635.6L1192.2 635.2L1193.2 632.5L1194.3 634.0L1195.4 634.5L1196.7 632.8L1197.8 634.2L1199.0 630.7L1200.1 631.3L1201.3 632.9L1202.3 636.9L1203.4 636.2L1204.5 634.7L1205.6 634.6L1206.6 635.0L1207.8 635.1L1208.9 631.6L1209.9 632.8L1211.0 636.0L1212.0 633.7L1213.1 632.8L1214.1 633.7L1215.4 632.9L1216.5 630.1L1217.6 630.6L1218.9 631.1L1220.0 629.7L1221.2 629.5L1222.5 629.2L1223.5 621.0L1224.5 632.3L1226.2 629.8L1227.3 630.8L1228.3 629.8L1229.6 628.6L1230.6 628.6L1231.7 630.7L1233.0 628.1L1234.2 627.3L1235.5 625.5L1236.7 626.9L1238.0 622.8L1239.0 623.6L1240.3 626.4L1241.4 626.7L1242.6 624.1L1243.7 621.7L1244.8 624.3L1246.1 620.8L1247.2 619.9L1248.3 620.0L1249.5 620.2L1250.6 618.7L1251.7 617.6L1252.8 617.4L1253.9 615.9L1255.0 616.0L1256.1 615.1L1257.2 615.3L1258.3 614.6L1259.4 613.2L1260.5 613.8L1261.6 613.4L1262.7 611.8L1263.8 610.5L1264.9 610.6L1266.0 607.8L1267.1 608.1L1268.2 608.2L1269.3 608.6L1270.4 605.5L1271.5 606.6L1272.6 606.2L1273.7 605.3L1274.8 601.3L1275.9 603.0L1277.0 600.5L1278.1 598.7L1279.2 595.2L1280.3 592.4L1281.4 590.1L1282.5 588.9L1283.6 585.6L1284.7 581.7L1285.8 579.1L1286.9 576.3L1288.5 571.0M1297.5 560.0L1298.5 562.0L1299.5 564.5L1300.5 562.0L1301.5 558.0M1308.5 574.0L1309.7 580.0L1312.9 605.0L1316.0 636.0L1319.0 664.5L1324.0 665.0" stroke="#0000ff" stroke-width="1" fill="none" stroke-linejoin="round" shape-rendering="crispEdges"/>
<path d="M358 616h1V641h-1zM359 620h1V640h-1zM1289 559h1V571h-1zM1290 549h1V560h-1zM1291 529h1V550h-1zM1292 366h1V530h-1zM1293 217h1V366h-1zM1294 348h1V507h-1zM1295 506h1V542h-1zM1296 541h1V556h-1zM1297 555h1V561h-1zM1301 552h1V560h-1zM1302 539h1V553h-1zM1303 436h1V540h-1zM1304 283h1V437h-1zM1305 222h1V379h-1zM1306 379h1V548h-1zM1307 547h1V563h-1zM1308 562h1V575h-1z" fill="#0000ff" shape-rendering="crispEdges"/>
<defs><pattern id="dz" width="2" height="2" patternUnits="userSpaceOnUse"><rect width="2" height="2" fill="#fff"/><rect width="1" height="1" fill="#f0f0f0"/><rect x="1" y="1" width="1" height="1" fill="#f0f0f0"/></pattern></defs>
<rect x="61" y="666" width="1264" height="16" fill="url(#dz)"/>
<rect x="59" y="666" width="2" height="18" fill="#a0a0a0"/><rect x="61" y="682" width="1266" height="2" fill="#fff"/><rect x="1325" y="666" width="2" height="18" fill="#fff"/>
<rect x="61" y="666" width="17" height="16" fill="#f0f0f0"/><path d="M61.5 681.5V666.5H77.5" stroke="#fff" fill="none" shape-rendering="crispEdges"/><path d="M77.5 666V681.5H61" stroke="#696969" fill="none" shape-rendering="crispEdges"/><path d="M76.5 667V680.5H62" stroke="#a0a0a0" fill="none" shape-rendering="crispEdges"/>
<rect x="197" y="666" width="16" height="16" fill="#f0f0f0"/><path d="M197.5 681.5V666.5H212.5" stroke="#fff" fill="none" shape-rendering="crispEdges"/><path d="M212.5 666V681.5H197" stroke="#696969" fill="none" shape-rendering="crispEdges"/><path d="M211.5 667V680.5H198" stroke="#a0a0a0" fill="none" shape-rendering="crispEdges"/>
<rect x="1308" y="666" width="17" height="16" fill="#f0f0f0"/><path d="M1308.5 681.5V666.5H1324.5" stroke="#fff" fill="none" shape-rendering="crispEdges"/><path d="M1324.5 666V681.5H1308" stroke="#696969" fill="none" shape-rendering="crispEdges"/><path d="M1323.5 667V680.5H1309" stroke="#a0a0a0" fill="none" shape-rendering="crispEdges"/>
<path d="M70 670.500l-4 3.500 4 3.500z" fill="#000"/><path d="M1314.500 670l4 4-4 4z" fill="#000"/>
<path d="M68.5 682V685M140.5 682V685M192.5 682V685M232.5 682V685M265.5 682V685M293.5 682V685M317.5 682V685M338.5 682V685M357.5 682V685M482.5 682V685M555.5 682V685M606.5 682V685M647.5 682V685M679.5 682V685M707.5 682V685M731.5 682V685M752.5 682V685M771.5 682V685M896.5 682V685M969.5 682V685M1021.5 682V685M1061.5 682V685M1094.5 682V685M1121.5 682V685M1145.5 682V685M1167.5 682V685M1186.5 682V685M1310.5 682V685" stroke="#000" stroke-width="1" fill="none" shape-rendering="crispEdges"/>
<text x="67.6" y="697" text-anchor="middle">20</text>
<text x="139.6" y="697" text-anchor="middle">30</text>
<text x="191.6" y="697" text-anchor="middle">40</text>
<text x="231.6" y="697" text-anchor="middle">50</text>
<text x="264.6" y="697" text-anchor="middle">60</text>
<text x="316.6" y="697" text-anchor="middle">80</text>
<text x="356.6" y="697" text-anchor="middle">100</text>
<text x="481.6" y="697" text-anchor="middle">200</text>
<text x="554.6" y="697" text-anchor="middle">300</text>
<text x="605.6" y="697" text-anchor="middle">400</text>
<text x="646.6" y="697" text-anchor="middle">500</text>
<text x="678.6" y="697" text-anchor="middle">600</text>
<text x="730.6" y="697" text-anchor="middle">800</text>
<text x="770.6" y="697" text-anchor="middle">1.0k</text>
<text x="895.6" y="697" text-anchor="middle">2.0k</text>
<text x="968.6" y="697" text-anchor="middle">3.0k</text>
<text x="1020.6" y="697" text-anchor="middle">4.0k</text>
<text x="1060.6" y="697" text-anchor="middle">5.0k</text>
<text x="1093.6" y="697" text-anchor="middle">6.0k</text>
<text x="1144.6" y="697" text-anchor="middle">8.0k</text>
<text x="1185.6" y="697" text-anchor="middle">10.0k</text>
<text x="1309.6" y="697" text-anchor="middle">20.0k</text>
<text x="683" y="708.8" text-anchor="middle">Frequency (Hz)</text>
<rect x="1342" y="701" width="9" height="9" fill="#f0f0f0"/><path d="M1342.5 710V701.5H1351" stroke="#fff" fill="none" shape-rendering="crispEdges"/><path d="M1350.5 701V709.5H1342" stroke="#a0a0a0" stroke-width="1" fill="none" shape-rendering="crispEdges"/><path d="M1344 705.5h5M1346.5 703v5" stroke="#000" fill="none" shape-rendering="crispEdges"/>
<rect x="1354" y="701" width="9" height="9" fill="#f0f0f0"/><path d="M1354.5 710V701.5H1363" stroke="#fff" fill="none" shape-rendering="crispEdges"/><path d="M1362.5 701V709.5H1354" stroke="#a0a0a0" stroke-width="1" fill="none" shape-rendering="crispEdges"/><path d="M1356 705.5h5M1358.5 703v5" stroke="#000" fill="none" shape-rendering="crispEdges"/>
</svg>
<div class="a" style="left:208px;top:401px;width:120px;height:55px;background:#fff;box-shadow:0 1px 7px 1px rgba(0,0,0,0.45);outline:1px solid #b4b49c"></div>
<div class="a" style="left:208px;top:431px;width:120px;height:25px;background:#f0f0f0"></div>
<div class="a" style="left:216px;top:407px;width:16px;height:16px;box-sizing:border-box;border:1px solid #000"></div>
<div class="a" style="left:221px;top:412px;width:1px;height:5px;background:#000"></div><div class="a" style="left:226px;top:412px;width:1px;height:5px;background:#000"></div>
<svg class="a" style="left:307px;top:409px" width="12" height="12" viewBox="0 0 12 12"><path d="M1 1L11 11M11 1L1 11" stroke="#666" stroke-width="1" fill="none"/></svg>

<div class="t" style="left:236.95px;top:408.7px;font-size:12px;letter-spacing:0.027px;color:#999;">IMD</div>
<div class="t" style="left:210.96px;top:432.5px;font-size:20.5px;letter-spacing:1.826px;font-family:'DejaVu Sans','Liberation Sans',sans-serif;-webkit-text-stroke:0.35px #000;">0.0000 %</div>
<div class="a" style="left:1px;top:711px;width:1364px;height:1px;background:#fafafa"></div>
<div class="a" style="left:0;top:712px;width:1366px;height:1px;background:#696969"></div>
<div class="a" style="left:0;top:713px;width:1366px;height:1px;background:#fff"></div>
<div class="sunk" style="left:4px;width:118px"></div>
<div class="t" style="left:7.52px;top:717.8px;font-size:12px;letter-spacing:0.280px;">Stopped</div>
<div class="sunk" style="left:124px;width:101px"></div>
<div class="t" style="left:127.46px;top:717.8px;font-size:12px;letter-spacing:0.005px;">Real Time</div>
<div class="sunk" style="left:227px;width:71px"></div>
<div class="t" style="left:230.32px;top:717.8px;font-size:12px;letter-spacing:0.276px;">44100 Hz</div>
<div class="sunk" style="left:300px;width:51px"></div>
<div class="t" style="left:303.34px;top:717.8px;font-size:12px;letter-spacing:0.232px;">24 Bit</div>
<div class="sunk" style="left:353px;width:61px"></div>
<div class="t" style="left:356.39px;top:717.8px;font-size:12px;letter-spacing:0.137px;">Mono</div>
<div class="sunk" style="left:416px;width:101px"></div>
<div class="t" style="left:419.40px;top:717.8px;font-size:12px;letter-spacing:0.113px;">FFT 131072 pts</div>
<div class="sunk" style="left:519px;width:73px"></div>
<div class="t" style="left:522.28px;top:717.8px;font-size:12px;letter-spacing:0.362px;">Blackman</div>
<div class="sunk" style="left:594px;width:769px"></div>
<div class="a" style="left:1px;top:736px;width:1364px;height:1px;background:#fafafa"></div>
<div class="a" style="left:0;top:737px;width:1366px;height:1px;background:#686868"></div>
<div class="a" style="left:0;top:738px;width:1366px;height:30px;background:linear-gradient(90deg,#d0e5ed 0%,#d3e5ec 35%,#d8e3ec 70%,#d6dcea 100%)"></div>
<div class="a" style="left:0;top:738px;width:1366px;height:1px;background:rgba(255,255,255,0.35)"></div>
<div class="a" style="left:346px;top:738px;width:160px;height:30px;background:#ebf4f8"></div><div class="a" style="left:346px;top:738px;width:160px;height:1px;background:#f6fdff"></div>
<div class="a" style="left:189px;top:766px;width:151px;height:2px;background:#0a74d2"></div>
<div class="a" style="left:346px;top:766px;width:160px;height:2px;background:#0a74d2"></div>
<svg class="a" style="left:0;top:738px" width="520" height="30" viewBox="0 0 520 30">
<path d="M9.800 8.800L15.800 7.900V14H9.800ZM17 7.700L26.200 6.800V14H17ZM9.800 15.200H15.800V21.400L9.800 20.500ZM17 15.200H26.200V23L17 21.600Z" fill="#000"/>
<circle cx="54.300" cy="14.500" r="6.700" fill="none" stroke="#000" stroke-width="2"/>
<path d="M82.500 11.500H92.200V17.200H82.500ZM82.500 7.200V9.400H92.200V7.200M82.500 21.800V19.600H92.200V21.800" stroke="#000" stroke-width="1.300" fill="none"/><path d="M96.400 7.200V11.500M96.400 15.700V21.800" stroke="#000" stroke-width="1.200" fill="none"/><rect x="95.300" y="11.300" width="2.400" height="2.400" fill="#000"/>
<defs><linearGradient id="eg1" x1="0" y1="0" x2="1" y2="0.35"><stop offset="0" stop-color="#2aa6e2"/><stop offset="0.45" stop-color="#30c3c6"/><stop offset="1" stop-color="#62de52"/></linearGradient><linearGradient id="eg2" x1="0" y1="0" x2="0.3" y2="1"><stop offset="0" stop-color="#2196e6"/><stop offset="1" stop-color="#1467cc"/></linearGradient><linearGradient id="og" x1="0" y1="0" x2="1" y2="0"><stop offset="0" stop-color="#f01c30"/><stop offset="0.55" stop-color="#e01628"/><stop offset="1" stop-color="#f04a48"/></linearGradient></defs>
<circle cx="129" cy="15" r="8" fill="url(#eg2)"/>
<path d="M122.300 10.600A8 8 0 0 1 137 15.400Q136.600 18 133.500 18.300Q131 18.100 130.300 16Q130 13.600 131.500 12.500Q127 11 124.800 14Q123.500 12 122.300 10.600Z" fill="url(#eg1)"/>
<path d="M125.200 13.400Q123.800 19.500 129.500 21.800Q133.500 22.300 136.200 18.600Q131.500 20.600 129 17.800Q127.500 15.800 128.500 13.200Q126.800 12.500 125.200 13.400Z" fill="#0f4fa3"/>
<path d="M128.600 13.200Q127.600 15.800 129.500 17.700Q129.600 15 130.900 13.400Q129.700 12.800 128.600 13.200Z" fill="#f2f8fc"/>
<path d="M158 8h6.500l1.500 2h-8z" fill="#e8a200"/><path d="M158 8.600h7l1 1.400h8v11h-16z" fill="#e9a800"/><path d="M158 10h16v11h-16z" fill="#ffd65c"/><path d="M161.200 15h9.700v6.700h-9.700z" fill="#3a8ee6"/><path d="M164.200 18h3.800v3.700h-3.800z" fill="#ffcf48"/>
<path fill-rule="evenodd" d="M193 15a8 8 0 1 0 16 0a8 8 0 1 0 -16 0ZM198.100 15a3.300 5.200 0 1 0 6.600 0a3.300 5.200 0 1 0 -6.600 0Z" fill="url(#og)"/>
<path d="M203.200 8.200Q208 10.500 207.300 17.500Q206.500 12 203.200 8.200Z" fill="#b80f1c" opacity="0.7"/>
</svg>
<div class="t" style="left:213.22px;top:745.8px;font-size:12px;letter-spacing:0.082px;">Телеграм Онлайн - ...</div>
<svg class="a" style="left:354px;top:745px" width="16" height="16" viewBox="0 0 16 16" shape-rendering="crispEdges">
<rect x="0" y="0" width="16" height="16" fill="#fff"/>
<path d="M0.5 0V16M3.5 0V16M6.5 0V16M9.5 0V16M12.5 0V16M0 0.5H16M0 3.5H16M0 6.5H16M0 9.5H16M0 12.5H16" stroke="#808080" stroke-width="1" fill="none"/>
<path d="M15.5 0V16M0 15.5H16" stroke="#000" stroke-width="1" fill="none"/>
<path d="M1 4h1v1h-1zM2 4h1v1h-1zM3 4h1v1h-1zM4 4h1v1h-1zM6 4h1v1h-1zM10 4h1v1h-1zM10 5h1v1h-1zM11 5h1v1h-1zM12 6h1v1h-1z" fill="#f00"/><path d="M1 5h1v1h-1zM2 5h1v1h-1zM3 6h1v1h-1zM4 7h1v1h-1zM5 4h1v1h-1zM5 5h1v1h-1zM5 6h1v1h-1zM5 7h1v1h-1zM7 8h1v1h-1zM9 8h1v1h-1zM9 7h1v1h-1zM10 6h1v1h-1zM11 8h1v1h-1zM11 9h1v1h-1zM12 10h1v1h-1zM13 8h1v1h-1zM13 9h1v1h-1zM13 10h1v1h-1zM13 11h1v1h-1z" fill="#00f"/>
</svg>
<div class="t" style="left:373.76px;top:745.8px;font-size:12px;letter-spacing:-0.418px;">SpectraPLUS Professi...</div>
<svg class="a" style="left:1140px;top:738px" width="226" height="30" viewBox="0 0 226 30">
<path d="M8 17.500l5.500-5.500 5.500 5.500" stroke="#000" stroke-width="1.300" fill="none"/>
<rect x="34.500" y="11" width="10.500" height="8" fill="none" stroke="#000" stroke-width="1.200"/><rect x="36" y="12.500" width="7.500" height="5" fill="#000"/><rect x="45.500" y="13.500" width="1.500" height="3" fill="#000"/><path d="M31 8v3M33.500 8v3M30 11h4.500v2.500q-2.200 2-4.500 0zM32.200 15v2.500h2" stroke="#000" stroke-width="1" fill="none"/>
<path d="M58 21a10 10 0 0 1 10-10M61 21a7 7 0 0 1 7-7M64 21a4 4 0 0 1 4-4" stroke="#000" stroke-width="1.200" fill="none"/><circle cx="67.500" cy="20.500" r="1.500" fill="#000"/>
<path d="M79 13h3l4-3.500v11l-4-3.500h-3z" stroke="#000" stroke-width="1.100" fill="none"/><path d="M88.500 12.500q2 2.500 0 5M91 10.500q3.500 4.500 0 9" stroke="#000" stroke-width="1.100" fill="none"/><path d="M93.500 9q4.500 6 0 12" stroke="#999" stroke-width="1" fill="none"/>
<path d="M185.600 7.800h15.200v11.600h-5l-2.800 2.800l-2.800-2.800h-4.600z" stroke="#000" stroke-width="1.300" fill="none"/><rect x="221" y="0" width="1" height="30" fill="#8e949e"/>
</svg>
<div class="t" style="left:1244.96px;top:746px;font-size:12px;letter-spacing:-0.650px;">РУС</div>
<div class="t" style="left:1280.46px;top:746px;font-size:12px;letter-spacing:-0.590px;">19:10</div>
</body></html>
